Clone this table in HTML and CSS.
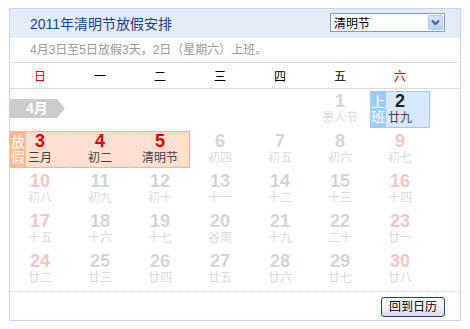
FILE: index.html
```html
<!DOCTYPE html>
<html lang="zh-CN">
<head>
<meta charset="utf-8">
<title>2011年清明节放假安排</title>
<link rel="stylesheet" href="styles.css">
</head>
<body>
<div class="cal">
  <div class="cal-head">
    <h1 class="cal-title">2011年清明节放假安排</h1>
    <div class="picker">
      <span class="picker-value">清明节</span>
      <span class="picker-btn">
        <svg width="15" height="15" viewBox="0 0 15 15"><polyline points="4,5.5 7.5,9 11,5.5" fill="none" stroke="#4a5f86" stroke-width="2"/></svg>
      </span>
    </div>
  </div>
  <p class="cal-note">4月3日至5日放假3天，2日（星期六）上班。</p>
  <div class="week">
    <span class="wk red">日</span>
    <span class="wk">一</span>
    <span class="wk">二</span>
    <span class="wk">三</span>
    <span class="wk">四</span>
    <span class="wk">五</span>
    <span class="wk red">六</span>
  </div>
  <div class="days">
    <div class="cell"><span class="month-tag">4月</span></div>
    <div class="cell"></div>
    <div class="cell"></div>
    <div class="cell"></div>
    <div class="cell"></div>
    <div class="cell dim"><b class="num">1</b><span class="lunar">愚人节</span></div>
    <div class="cell work"><span class="badge">上班</span><b class="num">2</b><span class="lunar">廿九</span></div>

    <div class="cell hol hol-first"><span class="badge">放假</span><b class="num">3</b><span class="lunar">三月</span></div>
    <div class="cell hol"><b class="num">4</b><span class="lunar">初二</span></div>
    <div class="cell hol hol-last"><b class="num">5</b><span class="lunar">清明节</span></div>
    <div class="cell dim"><b class="num">6</b><span class="lunar">初四</span></div>
    <div class="cell dim"><b class="num">7</b><span class="lunar">初五</span></div>
    <div class="cell dim"><b class="num">8</b><span class="lunar">初六</span></div>
    <div class="cell dim we"><b class="num">9</b><span class="lunar">初七</span></div>

    <div class="cell dim we"><b class="num">10</b><span class="lunar">初八</span></div>
    <div class="cell dim"><b class="num">11</b><span class="lunar">初九</span></div>
    <div class="cell dim"><b class="num">12</b><span class="lunar">初十</span></div>
    <div class="cell dim"><b class="num">13</b><span class="lunar">十一</span></div>
    <div class="cell dim"><b class="num">14</b><span class="lunar">十二</span></div>
    <div class="cell dim"><b class="num">15</b><span class="lunar">十三</span></div>
    <div class="cell dim we"><b class="num">16</b><span class="lunar">十四</span></div>

    <div class="cell dim we"><b class="num">17</b><span class="lunar">十五</span></div>
    <div class="cell dim"><b class="num">18</b><span class="lunar">十六</span></div>
    <div class="cell dim"><b class="num">19</b><span class="lunar">十七</span></div>
    <div class="cell dim"><b class="num">20</b><span class="lunar">谷雨</span></div>
    <div class="cell dim"><b class="num">21</b><span class="lunar">十九</span></div>
    <div class="cell dim"><b class="num">22</b><span class="lunar">二十</span></div>
    <div class="cell dim we"><b class="num">23</b><span class="lunar">廿一</span></div>

    <div class="cell dim we"><b class="num">24</b><span class="lunar">廿二</span></div>
    <div class="cell dim"><b class="num">25</b><span class="lunar">廿三</span></div>
    <div class="cell dim"><b class="num">26</b><span class="lunar">廿四</span></div>
    <div class="cell dim"><b class="num">27</b><span class="lunar">廿五</span></div>
    <div class="cell dim"><b class="num">28</b><span class="lunar">廿六</span></div>
    <div class="cell dim"><b class="num">29</b><span class="lunar">廿七</span></div>
    <div class="cell dim we"><b class="num">30</b><span class="lunar">廿八</span></div>
  </div>
  <div class="cal-foot">
    <button class="back" type="button">回到日历</button>
  </div>
</div>
</body>
</html>
```

FILE: styles.css
```css
* {
  box-sizing: border-box;
}

body {
  margin: 0;
  background: #fff;
  font-family: "Liberation Sans", Arial, "Noto Sans CJK SC", sans-serif;
}

.cal {
  width: 452px;
  margin: 8px 0 0 9px;
  border: 1px solid #c4d5f2;
}

/* title bar */
.cal-head {
  height: 29px;
  background: #e5edf9;
  display: flex;
  align-items: center;
  justify-content: space-between;
  padding: 0 15px 0 20px;
}

.cal-title {
  margin: 0;
  font-size: 14px;
  font-weight: normal;
  color: #1b3f8f;
  line-height: 16px;
}

.picker {
  align-self: flex-start;
  margin-top: 4px;
  width: 115px;
  height: 19px;
  border: 1px solid #7f9db9;
  background: #fff;
  display: flex;
  align-items: center;
  justify-content: space-between;
  padding: 0 1px 0 3px;
  font-size: 12px;
  color: #000;
}

.picker-btn {
  width: 15px;
  height: 15px;
  border: 1px solid #b3c8f3;
  border-radius: 1px;
  background: linear-gradient(#dbe6fd, #b9cffa);
  display: flex;
}

.picker-btn svg {
  margin: -1px;
}

/* notice line */
.cal-note {
  margin: 0;
  height: 25px;
  line-height: 24px;
  padding-left: 20px;
  font-size: 12px;
  color: #999;
  border-bottom: 1px solid #ddd;
}

/* weekday header */
.week {
  display: grid;
  grid-template-columns: repeat(7, 60px);
  height: 26px;
  align-items: center;
  border-bottom: 1px solid #ddd;
}

.wk {
  text-align: center;
  font-size: 12px;
  color: #000;
}

.wk.red {
  color: #cc0000;
}

/* day grid */
.days {
  display: grid;
  grid-template-columns: repeat(7, 60px);
  grid-auto-rows: 40px;
  padding-bottom: 2px;
  border-bottom: 1px dotted #cfcfcf;
}

.cell {
  position: relative;
  margin-top: 2px;
  height: 37px;
  border: 1px solid transparent;
  display: flex;
  flex-direction: column;
  align-items: center;
}

.num {
  font-size: 18px;
  line-height: 18px;
  font-weight: bold;
}

.lunar {
  font-size: 12px;
  line-height: 16px;
}

.dim .num {
  color: #d2d5d9;
}

.dim.we .num {
  color: #f4c6c6;
}

.dim .lunar {
  color: #dadada;
}

/* month label */
.month-tag {
  align-self: flex-start;
  margin: 7px 0 0 -1px;
  width: 55px;
  height: 19px;
  background: #cccccc;
  color: #fff;
  font-size: 14px;
  font-weight: bold;
  line-height: 19px;
  padding-left: 16px;
  clip-path: polygon(0 0, 47px 0, 55px 50%, 47px 100%, 0 100%);
}

/* holiday band */
.hol {
  background: #ffdfcf;
  border-top-color: #ffb48e;
  border-bottom-color: #ffb48e;
}

.hol-first {
  border-left-color: #ffb48e;
}

.hol-last {
  border-right-color: #ffb48e;
}

.hol .num {
  color: #d40000;
}

.hol .lunar {
  color: #444;
}

/* make-up workday */
.work {
  background: #d6e9fe;
  border-color: #9ccbf8;
}

.work .num {
  color: #222;
}

.work .lunar {
  color: #444;
}

.badge {
  position: absolute;
  top: -1px;
  left: -1px;
  bottom: -1px;
  width: 16px;
  display: flex;
  align-items: center;
  justify-content: center;
  text-align: center;
  color: #fff;
  font-size: 14px;
  line-height: 15px;
  padding: 0 1px;
}

.hol .badge {
  background: #ffb996;
}

.work .badge {
  background: #9ccbf8;
}

/* footer */
.cal-foot {
  height: 28px;
  display: flex;
  justify-content: flex-end;
  align-items: flex-start;
  padding: 5px 15px 0 0;
}

.back {
  width: 64px;
  height: 20px;
  padding: 0;
  border: 1px solid #1f4a80;
  border-radius: 3px;
  background: linear-gradient(#ffffff, #f2f2ee 60%, #dcdad0);
  font-family: "Liberation Sans", Arial, "Noto Sans CJK SC", sans-serif;
  font-size: 12px;
  color: #000;
  line-height: 18px;
}
```
